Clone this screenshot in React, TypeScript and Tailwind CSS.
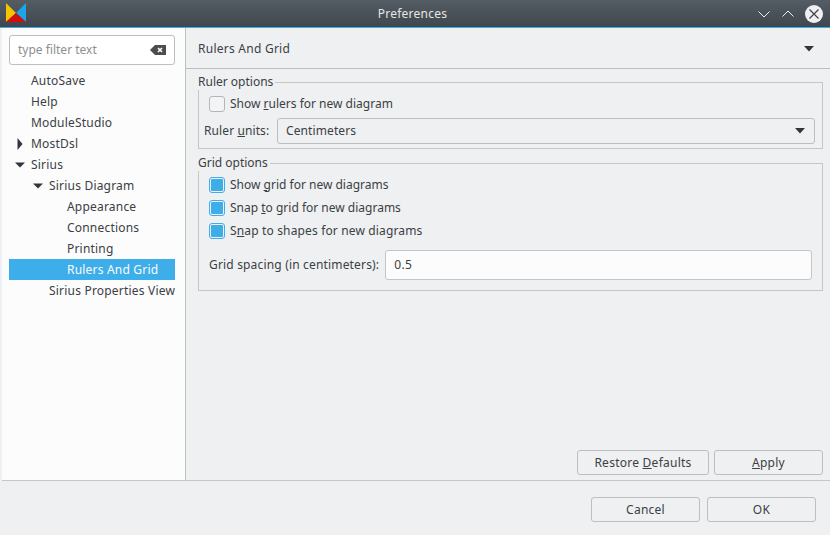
const TREE = [
  { label: "AutoSave", indent: 0 },
  { label: "Help", indent: 0 },
  { label: "ModuleStudio", indent: 0 },
  { label: "MostDsl", indent: 0, arrow: "right" },
  { label: "Sirius", indent: 0, arrow: "down" },
  { label: "Sirius Diagram", indent: 18, arrow: "down" },
  { label: "Appearance", indent: 36 },
  { label: "Connections", indent: 36 },
  { label: "Printing", indent: 36 },
  { label: "Rulers And Grid", indent: 36, selected: true },
  { label: "Sirius Properties View", indent: 18 },
];

function Arrow({ dir }: { dir: string }) {
  return (
    <svg width="12" height="12" viewBox="0 0 12 12" className="shrink-0">
      {dir === "down" ? (
        <path d="M1 3.5h10L6 8.5z" fill="#31363b" />
      ) : (
        <path d="M3.5 0v12L8.5 6z" fill="#31363b" />
      )}
    </svg>
  );
}

function Check({ checked, children }: { checked?: boolean; children: React.ReactNode }) {
  return (
    <div className="flex h-[23px] items-center">
      {checked ? (
        <div className="flex size-4 items-center justify-center rounded-[3px] border border-[#3daee9] bg-[#eff0f1]">
          <div className="size-3 rounded-[1px] bg-[#3daee9]" />
        </div>
      ) : (
        <div className="size-4 rounded-[3px] border border-[#b4b6b8] bg-[#f3f4f5]" />
      )}
      <span className="ml-[5px]">{children}</span>
    </div>
  );
}

function Btn({ w, children }: { w: string; children: React.ReactNode }) {
  return (
    <button className={`h-[25px] rounded-[3px] border border-[#bcbebf] bg-[#eff0f1] text-center tracking-[0.25px] ${w}`}>
      {children}
    </button>
  );
}

export default function App() {
  return (
    <div className="flex h-[535px] w-[830px] flex-col overflow-hidden bg-[#eff0f1] text-[12px] leading-4 text-[#3b4045] [font-family:'Noto_Sans',sans-serif]">
      <div className="flex h-[28px] shrink-0 items-center border-b border-[#3daee9] bg-gradient-to-b from-[#545c64] to-[#40474d] pl-[6px] pr-[7px] text-[#e4e6e8]">
        <svg width="20" height="20" viewBox="0 0 20 20" className="mb-[2px]">
          <path d="M0 0L10 10L0 19z" fill="#f5c400" />
          <path d="M20 0L10 10L20 19z" fill="#1aa7e8" />
          <path d="M10 10L20 19H0z" fill="#d40c0c" />
        </svg>
        <div className="flex-1 pl-[42px] text-center tracking-[0.25px]">Preferences</div>
        <div className="flex items-center gap-[10px]">
          <svg width="14" height="14" viewBox="0 0 14 14" fill="none" stroke="#eff0f1" strokeWidth="1">
            <path d="M1.5 4.5L7 10L12.5 4.5" />
          </svg>
          <svg width="14" height="14" viewBox="0 0 14 14" fill="none" stroke="#eff0f1" strokeWidth="1">
            <path d="M1.5 9.5L7 4L12.5 9.5" />
          </svg>
          <div className="flex size-[18px] items-center justify-center rounded-full bg-[#eff0f1]">
            <svg width="12" height="12" viewBox="0 0 12 12" fill="none" stroke="#40474d" strokeWidth="1.3">
              <path d="M1.5 1.5L10.5 10.5M10.5 1.5L1.5 10.5" />
            </svg>
          </div>
        </div>
      </div>

      <div className="flex min-h-0 flex-1">
        <div className="ml-[2px] w-[184px] shrink-0 border-r border-[#bcbebf] bg-[#fcfcfc] pl-[7px] pr-[10px] pt-[7px]">
          <div className="flex h-[30px] items-center justify-between rounded-[3px] border border-[#bcbebf] bg-white pl-2 pr-2 text-[#8c8f91]">
            <span>type filter text</span>
            <svg width="16" height="12" viewBox="0 0 16 12">
              <path d="M0 6L5 1h11v10H5z" fill="#4d4d4d" />
              <path d="M8 4l4 4M12 4l-4 4" stroke="#fff" strokeWidth="1.6" />
            </svg>
          </div>
          <div className="mt-[5px] overflow-hidden tracking-[0.2px]">
            {TREE.map((row) => (
              <div
                key={row.label}
                className={`flex h-[21px] items-center whitespace-nowrap ${row.selected ? "bg-[#3daee9] text-[#fcfcfc]" : ""}`}
                style={{ paddingLeft: row.indent + 5 }}
              >
                <div className="flex w-[17px] shrink-0 items-center">
                  {row.arrow && <Arrow dir={row.arrow} />}
                </div>
                {row.label}
              </div>
            ))}
          </div>
        </div>

        <div className="flex min-w-0 flex-1 flex-col">
          <div className="flex h-[41px] shrink-0 items-center justify-between border-b border-[#bcbebf] pl-3 pr-4 pt-px">
            <span className="tracking-[0.25px]">Rulers And Grid</span>
            <svg width="10" height="6" viewBox="0 0 10 6">
              <path d="M0 0h10L5 5.5z" fill="#31363b" />
            </svg>
          </div>

          <div className="flex flex-1 flex-col pl-3 pr-[7px] pt-[5px]">
            <fieldset className="h-[75px] border border-[#c4c6c8] pl-[10px] pr-[7px] pt-[2px] pb-1">
              <legend className="-ml-[11px] pr-0.5">Ruler options</legend>
              <Check>
                Show <u>r</u>ulers for new diagram
              </Check>
              <div className="-ml-[5px] mt-[3px] flex items-center">
                <span className="mr-[8px] w-[65px] whitespace-nowrap tracking-[0.1px]">
                  Ruler <u>u</u>nits:
                </span>
                <div className="flex h-[26px] flex-1 items-center justify-between rounded-[3px] border border-[#bcbebf] bg-[#eff0f1] pl-2 pr-[9px]">
                  <span className="tracking-[0.1px]">Centimeters</span>
                  <svg width="10" height="6" viewBox="0 0 10 6">
                    <path d="M0 0h10L5 5.5z" fill="#31363b" />
                  </svg>
                </div>
              </div>
            </fieldset>

            <fieldset className="mt-[6px] h-[136px] border border-[#c4c6c8] px-[10px] pt-[2px]">
              <legend className="-ml-[11px] pr-0.5">Grid options</legend>
              <Check checked>
                Show <u>g</u>rid for new diagrams
              </Check>
              <Check checked>
                Snap <u>t</u>o grid for new diagrams
              </Check>
              <Check checked>
                <span className="tracking-[0.15px]">
                  S<u>n</u>ap to shapes for new diagrams
                </span>
              </Check>
              <div className="mt-[8px] flex items-center">
                <span className="mr-[6px] whitespace-nowrap tracking-[0.17px]">Grid spacing (in centimeters):</span>
                <div className="flex h-[30px] flex-1 items-center rounded-[3px] border border-[#c4c6c8] bg-[#fcfcfc] pl-2 tracking-[0.4px]">
                  0.5
                </div>
              </div>
            </fieldset>

            <div className="mt-auto mb-[5px] flex justify-end gap-[5px]">
              <Btn w="w-[132px]">
                Restore <u>D</u>efaults
              </Btn>
              <Btn w="w-[109px]">
                <u>A</u>pply
              </Btn>
            </div>
          </div>
        </div>
      </div>

      <div className="ml-[2px] flex h-[55px] shrink-0 items-start justify-end gap-[7px] border-t border-[#c4c6c8] pr-[14px] pt-[16px]">
        <Btn w="w-[109px]">Cancel</Btn>
        <Btn w="w-[109px]">OK</Btn>
      </div>
    </div>
  );
}
